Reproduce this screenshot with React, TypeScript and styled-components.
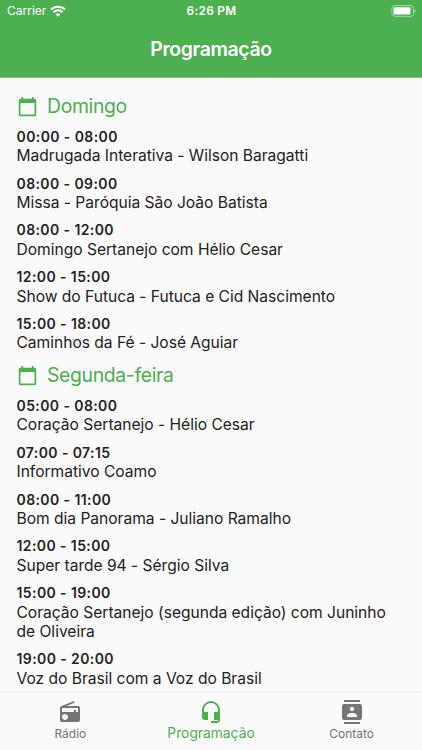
import React from "react";
import styled, { createGlobalStyle } from "styled-components";
import { MdCalendarToday, MdContacts, MdHeadsetMic, MdRadio } from "react-icons/md";

const GREEN = "#4caf50";

const GlobalStyle = createGlobalStyle`
  * { box-sizing: border-box; }
  body { margin: 0; background: #fafafa; }
`;

const Screen = styled.div`
  display: flex;
  flex-direction: column;
  width: 422px;
  height: 750px;
  overflow: hidden;
  background: #fafafa;
  color: #222;
  font-family: Inter, "Liberation Sans", sans-serif;
`;

const Header = styled.header`
  flex: none;
  height: 78px;
  background: ${GREEN};
  border-bottom: 1px solid #7fc482;
  color: #fff;
`;

const StatusBar = styled.div`
  display: grid;
  grid-template-columns: 1fr auto 1fr;
  align-items: center;
  height: 21px;
  padding: 1px 6px 0 7px;
  font-size: 12px;
  line-height: 14px;
`;

const Carrier = styled.div`
  display: flex;
  align-items: center;
  gap: 4px;
`;

const Clock = styled.div`
  font-weight: 600;
  font-size: 11.8px;
  letter-spacing: 0.3px;
`;

const BatteryIcon = styled.svg`
  justify-self: end;
`;

const Title = styled.h1`
  margin: 0;
  height: 56px;
  font-size: 19.4px;
  font-weight: 600;
  line-height: 57px;
  letter-spacing: -0.37px;
  text-align: center;
`;

const Schedule = styled.main`
  flex: 1;
  min-height: 0;
  overflow: hidden;
  padding: 5.8px 16.5px 0;
`;

const DayHeading = styled.h2`
  display: flex;
  align-items: center;
  gap: 9.5px;
  height: 43px;
  margin: 0;
  padding-top: 2px;
  color: ${GREEN};
  font-size: 19.4px;
  font-weight: 400;
  line-height: 24px;
  letter-spacing: -0.35px;

  svg { flex: none; width: 21px; height: 21px; }
`;

const Programs = styled.div`
  display: flex;
  flex-direction: column;
  gap: 7.8px;
`;

const Time = styled.div`
  font-size: 14px;
  font-weight: 600;
  line-height: 19.5px;
  letter-spacing: 0.4px;
`;

const Name = styled.div`
  font-size: 15.6px;
  line-height: 19.5px;
  letter-spacing: -0.02px;
`;

const TabBar = styled.nav`
  flex: none;
  display: grid;
  grid-template-columns: repeat(3, 1fr);
  height: 58px;
  border-top: 1px solid #f2f2f2;
  background: #fafafa;
`;

const Tab = styled.div<{ $active?: boolean }>`
  display: flex;
  flex-direction: column;
  align-items: center;
  padding-top: 7px;
  color: ${(p) => (p.$active ? GREEN : "#757575")};
  font-size: ${(p) => (p.$active ? "13.8px" : "12px")};
  line-height: ${(p) => (p.$active ? "18px" : "20px")};
  letter-spacing: 0;

  svg { width: 24px; height: 24px; }
`;

const days = [
  {
    day: "Domingo",
    programs: [
      ["00:00 - 08:00", "Madrugada Interativa - Wilson Baragatti"],
      ["08:00 - 09:00", "Missa - Paróquia São João Batista"],
      ["08:00 - 12:00", "Domingo Sertanejo com Hélio Cesar"],
      ["12:00 - 15:00", "Show do Futuca - Futuca e Cid Nascimento"],
      ["15:00 - 18:00", "Caminhos da Fé - José Aguiar"],
    ],
  },
  {
    day: "Segunda-feira",
    programs: [
      ["05:00 - 08:00", "Coração Sertanejo - Hélio Cesar"],
      ["07:00 - 07:15", "Informativo Coamo"],
      ["08:00 - 11:00", "Bom dia Panorama - Juliano Ramalho"],
      ["12:00 - 15:00", "Super tarde 94 - Sérgio Silva"],
      ["15:00 - 19:00", "Coração Sertanejo (segunda edição) com Juninho de Oliveira"],
      ["19:00 - 20:00", "Voz do Brasil com a Voz do Brasil"],
    ],
  },
];

export default function App() {
  return (
    <Screen>
      <GlobalStyle />
      <Header>
        <StatusBar>
          <Carrier>
            Carrier
            <svg width="16" height="12" viewBox="0 0 16 12" fill="none" stroke="#fff" strokeWidth="2">
              <path d="M1 4.5a10 10 0 0 1 14 0M3.5 7.2a6.4 6.4 0 0 1 9 0" />
              <path d="M8 11.8 5.6 9.4a3.4 3.4 0 0 1 4.8 0Z" fill="#fff" stroke="none" />
            </svg>
          </Carrier>
          <Clock>6:26 PM</Clock>
          <BatteryIcon width="25" height="12" viewBox="0 0 25 12">
            <rect x="0.9" y="0.5" width="21.6" height="10.8" rx="3" fill="none" stroke="#fff" strokeOpacity="0.5" />
            <rect x="2.6" y="2.2" width="16.8" height="7.4" rx="1.2" fill="#fff" />
            <path d="M23.7 4.2c1.3.6 1.3 3 0 3.6Z" fill="#fff" fillOpacity="0.6" />
          </BatteryIcon>
        </StatusBar>
        <Title>Programação</Title>
      </Header>
      <Schedule>
        {days.map(({ day, programs }) => (
          <section key={day}>
            <DayHeading>
              <MdCalendarToday />
              {day}
            </DayHeading>
            <Programs>
              {programs.map(([time, name]) => (
                <div key={time}>
                  <Time>{time}</Time>
                  <Name>{name}</Name>
                </div>
              ))}
            </Programs>
          </section>
        ))}
      </Schedule>
      <TabBar>
        <Tab>
          <MdRadio />
          Rádio
        </Tab>
        <Tab $active>
          <MdHeadsetMic />
          Programação
        </Tab>
        <Tab>
          <MdContacts />
          Contato
        </Tab>
      </TabBar>
    </Screen>
  );
}
